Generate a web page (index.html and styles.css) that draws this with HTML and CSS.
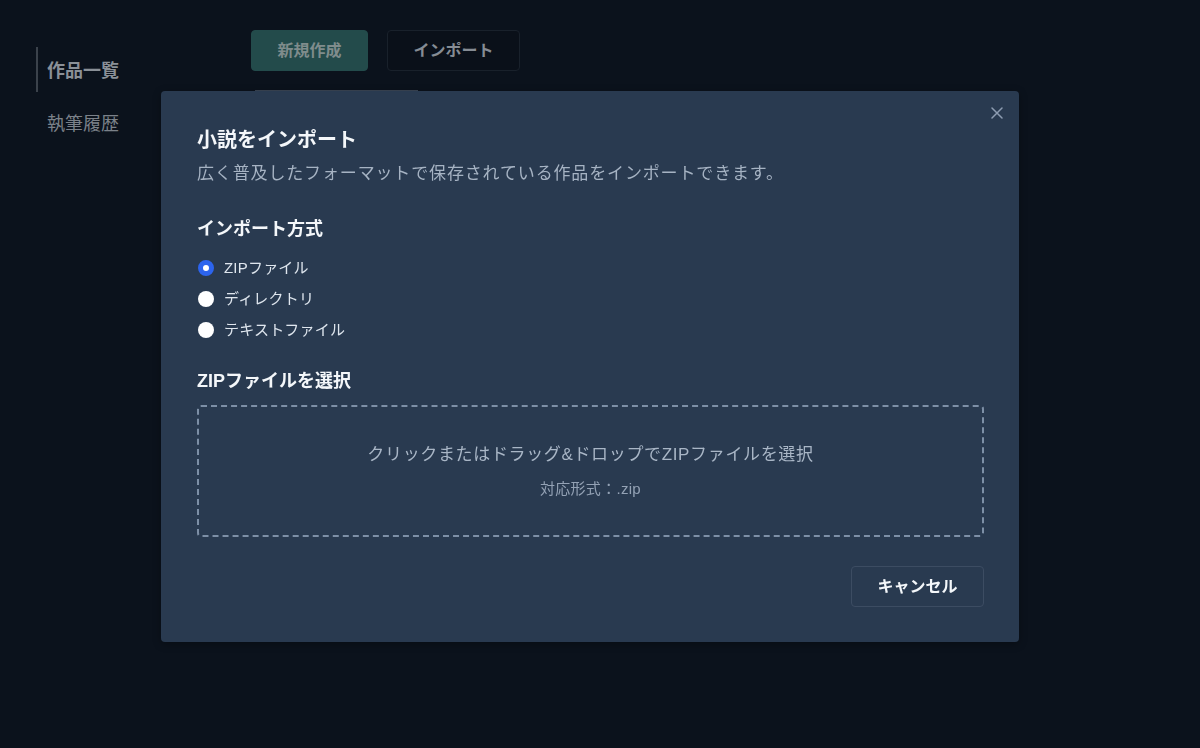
FILE: index.html
```html
<!DOCTYPE html>
<html lang="ja">
<head>
<meta charset="utf-8">
<title>小説をインポート</title>
<link rel="stylesheet" href="styles.css">
</head>
<body>
<div class="app">
  <nav class="sidebar">
    <div class="nav-item active">作品一覧</div>
    <div class="nav-item">執筆履歴</div>
  </nav>
  <main class="main">
    <div class="toolbar">
      <button class="btn btn-primary">新規作成</button>
      <button class="btn btn-outline">インポート</button>
    </div>
    <div class="tabs">
      <span class="tab t1"></span>
      <span class="tab t2"></span>
      <span class="tab t3"></span>
    </div>
  </main>
</div>

<div class="modal">
  <button class="close" aria-label="閉じる">
    <svg width="12" height="12" viewBox="0 0 12 12"><path d="M1 1 L11 11 M11 1 L1 11" stroke="currentColor" stroke-width="1.5" stroke-linecap="round"/></svg>
  </button>
  <h2 class="title">小説をインポート</h2>
  <p class="subtitle">広く普及したフォーマットで保存されている作品をインポートできます。</p>

  <h3 class="section">インポート方式</h3>
  <div class="radios">
    <label class="radio-row"><span class="radio checked"></span><span class="radio-label">ZIPファイル</span></label>
    <label class="radio-row"><span class="radio"></span><span class="radio-label">ディレクトリ</span></label>
    <label class="radio-row"><span class="radio"></span><span class="radio-label">テキストファイル</span></label>
  </div>

  <h3 class="section section-2">ZIPファイルを選択</h3>
  <div class="dropzone">
    <div class="drop-main">クリックまたはドラッグ&amp;ドロップでZIPファイルを選択</div>
    <div class="drop-sub">対応形式：.zip</div>
  </div>

  <div class="footer">
    <button class="btn-cancel">キャンセル</button>
  </div>
</div>
</body>
</html>
```

FILE: styles.css
```css
* { box-sizing: border-box; }

html, body {
  margin: 0;
  padding: 0;
  height: 100%;
}

body {
  background: #0b121c;
  font-family: "Liberation Sans", "Noto Sans CJK JP", sans-serif;
  color: #e8edf3;
}

.app {
  display: flex;
  height: 100%;
}

.sidebar {
  width: 251px;
  padding: 47px 0 0 36px;
  display: flex;
  flex-direction: column;
  gap: 8px;
}

.nav-item {
  height: 45px;
  line-height: 45px;
  padding: 2px 0 0 9px;
  font-size: 18px;
  color: #7b8189;
  border-left: 2px solid transparent;
}

.nav-item.active {
  border-left-color: #3b424b;
  color: #8a9097;
  font-weight: bold;
}

.main {
  padding-top: 30px;
  flex: 1;
}

.toolbar {
  display: flex;
  gap: 19px;
}

.btn {
  height: 41px;
  border-radius: 4px;
  font-family: inherit;
  font-size: 16px;
  font-weight: bold;
  padding: 0 0 3px;
}

.btn-primary {
  width: 117px;
  background: #234b4b;
  border: 1px solid #234b4b;
  color: #7f8c8c;
}

.btn-outline {
  width: 133px;
  background: #0a1019;
  border: 1px solid #19212b;
  color: #868c94;
}

.tabs {
  display: flex;
  gap: 0;
  margin-top: 19px;
  padding-left: 4px;
}

.tab {
  height: 20px;
  background: #3a4554;
}
.t1 { width: 30px; }
.t2 { width: 50px; }
.t3 { width: 83px; }

/* Modal */
.modal {
  position: fixed;
  left: 161px;
  top: 91px;
  width: 858px;
  height: 551px;
  background: #293a50;
  border-radius: 4px;
  padding: 37px 35px 35px 36px;
  display: flex;
  flex-direction: column;
  box-shadow: 0 2px 8px rgba(0, 0, 0, 0.3);
}

.close {
  position: absolute;
  top: 16px;
  right: 16px;
  width: 12px;
  height: 12px;
  padding: 0;
  border: 0;
  background: none;
  color: #8d9cb1;
  display: flex;
}

.title {
  margin: 0;
  font-size: 20px;
  line-height: 24px;
  font-weight: bold;
  color: #f4f7fa;
}

.subtitle {
  margin: 9px 0 0;
  font-size: 17px;
  line-height: 26px;
  letter-spacing: 0.85px;
  color: #a6b3c3;
}

.section {
  margin: 29px 0 0;
  font-size: 18px;
  line-height: 26px;
  font-weight: bold;
  color: #f4f7fa;
}

.section-2 {
  margin-top: 23px;
}

.radios {
  margin-top: 10px;
  display: flex;
  flex-direction: column;
}

.radio-row {
  height: 31px;
  display: flex;
  align-items: center;
  gap: 10px;
  padding-left: 1px;
}

.radio {
  width: 16px;
  height: 16px;
  border-radius: 50%;
  background: #ffffff;
  flex: none;
}

.radio.checked {
  background: #ffffff;
  border: 5px solid #2c64ee;
}

.radio-label {
  font-size: 15px;
  line-height: 20px;
  letter-spacing: 0.2px;
  color: #dfe6ee;
}

.dropzone {
  margin-top: 11px;
  height: 132px;
  border: 2px dashed #7d8fa6;
  border-radius: 4px;
  padding: 35px 0;
  display: flex;
  flex-direction: column;
  align-items: center;
  gap: 10px;
}

.drop-main {
  font-size: 17px;
  line-height: 26px;
  letter-spacing: 0.65px;
  color: #a9b6c6;
}

.drop-sub {
  font-size: 15px;
  line-height: 22px;
  letter-spacing: 0.3px;
  color: #94a2b5;
}

.footer {
  margin-top: 29px;
  display: flex;
  justify-content: flex-end;
}

.btn-cancel {
  width: 133px;
  height: 41px;
  border: 1px solid #3c4c62;
  border-radius: 4px;
  background: #293a50;
  color: #f4f7fa;
  font-family: inherit;
  font-size: 16px;
  font-weight: bold;
  padding: 0 0 3px;
}
```
